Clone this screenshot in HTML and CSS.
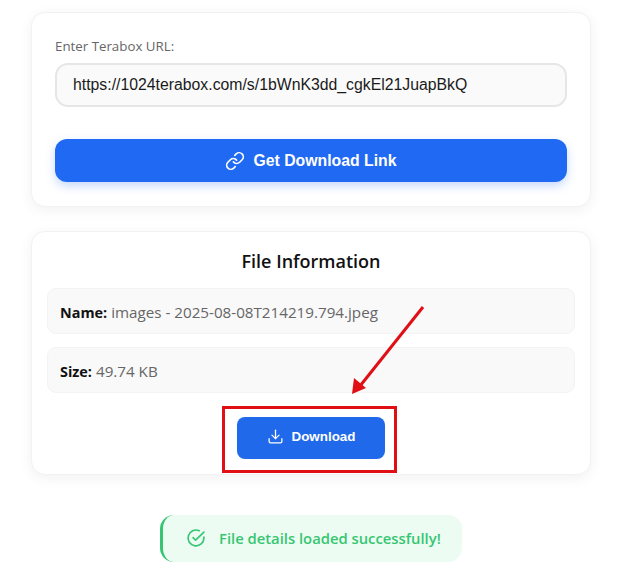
FILE: index.html
```html
<!DOCTYPE html>
<html lang="en">
<head>
    <meta charset="UTF-8">
    <meta name="viewport" content="width=device-width, initial-scale=1.0">
    <title>Terabox Downloader</title>
    <link rel="stylesheet" href="styles.css">
</head>
<body>
    <div class="page">
        <!--url form-->
        <div class="card form-card">
            <label class="label">Enter Terabox URL:</label>
            <div class="input">https://1024terabox.com/s/1bWnK3dd_cgkEl21JuapBkQ</div>
            <button class="btn-main">
                <svg class="icon-link" viewBox="0 0 24 24" fill="none" stroke="#fff" stroke-width="2" stroke-linecap="round" stroke-linejoin="round">
                    <path d="M10 13a5 5 0 0 0 7.54.54l3-3a5 5 0 0 0-7.07-7.07l-1.72 1.71"/>
                    <path d="M14 11a5 5 0 0 0-7.54-.54l-3 3a5 5 0 0 0 7.07 7.07l1.71-1.71"/>
                </svg>
                Get Download Link
            </button>
        </div>

        <!--file info-->
        <div class="card info-card">
            <h2 class="title">File Information</h2>
            <div class="row"><b>Name:</b> images - 2025-08-08T214219.794.jpeg</div>
            <div class="row"><b>Size:</b> 49.74 KB</div>
            <button class="btn-download">
                <svg class="icon-download" viewBox="0 0 24 24" fill="none" stroke="#fff" stroke-width="1.8" stroke-linecap="round" stroke-linejoin="round">
                    <path d="M3 15v4a2 2 0 0 0 2 2h14a2 2 0 0 0 2-2v-4"/>
                    <path d="M7 10l5 5 5-5"/>
                    <path d="M12 15V3"/>
                </svg>
                Download
            </button>
        </div>

        <!--toast-->
        <div class="toast">
            <svg class="icon-check" viewBox="0 0 24 24" fill="none" stroke="#36c672" stroke-width="2" stroke-linecap="round" stroke-linejoin="round">
                <path d="M21.5 11v1a9.5 9.5 0 1 1-5.6-8.7"/>
                <path d="M8.5 11.5l3 3L21.5 5"/>
            </svg>
            File details loaded successfully!
        </div>

        <!--red marks drawn over the screenshot-->
        <span class="mark-box"></span>
        <svg class="mark-arrow" viewBox="0 0 624 577">
            <path d="M423 307L360 386" stroke="#e00f16" stroke-width="3" fill="none"/>
            <path d="M352 394L354 378L366 388Z" fill="#e00f16"/>
        </svg>
    </div>
</body>
</html>
```

FILE: styles.css
```css
*{
    margin: 0;
    padding: 0;
    box-sizing: border-box;
}

body{
    background-color: #fff;
    font-family: "Open Sans", "Noto Sans", sans-serif;
    color: #111;
}

.page{
    width: 624px;
    height: 577px;
    overflow: hidden;
    padding: 12px 33px 0 31px;
    display: flex;
    flex-direction: column;
    align-items: stretch;
    position: relative;
}

.card{
    background-color: #fff;
    border: 1px solid #f2f2f3;
    border-radius: 14px;
    box-shadow: 0 3px 14px rgba(0, 0, 0, 0.06);
}

.form-card{
    height: 195px;
    padding: 24px 23px 0;
}

.label{
    display: block;
    font-size: 13.3px;
    line-height: 18px;
    color: #666;
}

.input{
    height: 44px;
    margin-top: 8px;
    padding-left: 16px;
    display: flex;
    align-items: center;
    font-family: "Liberation Sans", sans-serif;
    font-size: 15.8px;
    color: #1a1a1a;
    background-color: #fafafa;
    border: 2px solid #e6e6e6;
    border-radius: 13px;
}

.btn-main{
    width: 100%;
    height: 43px;
    margin-top: 32px;
    display: flex;
    justify-content: center;
    align-items: center;
    gap: 8px;
    border: none;
    border-radius: 12px;
    background-color: #2069f3;
    color: #fff;
    font-family: "Liberation Sans", sans-serif;
    font-size: 15.8px;
    font-weight: bold;
    box-shadow: 0 4px 10px rgba(32, 105, 243, 0.25);
}

.icon-link{
    width: 20px;
    height: 20px;
}

.info-card{
    height: 244px;
    margin-top: 24px;
    padding: 0 15px;
    display: flex;
    flex-direction: column;
    align-items: center;
}

.title{
    margin-top: 16px;
    font-size: 18px;
    line-height: 27px;
    font-weight: 600;
    color: #111;
}

.row{
    width: 100%;
    height: 46px;
    margin-top: 13px;
    padding: 2px 0 0 12px;
    display: flex;
    align-items: center;
    gap: 4px;
    font-size: 15.2px;
    color: #666;
    background-color: #f9f9fa;
    border: 1px solid #f3f3f4;
    border-radius: 9px;
}

.row b{
    font-weight: 700;
    font-size: 14.4px;
    color: #111;
}

.btn-download{
    width: 148px;
    height: 42px;
    margin-top: 24px;
    padding-bottom: 3px;
    display: flex;
    justify-content: center;
    align-items: center;
    gap: 8px;
    border: none;
    border-radius: 8px;
    background-color: #2069ea;
    color: #fff;
    font-family: "Liberation Sans", sans-serif;
    font-size: 13.4px;
    font-weight: bold;
}

.icon-download{
    width: 17px;
    height: 17px;
}

.toast{
    align-self: flex-start;
    width: 302px;
    height: 47px;
    margin: 40px 0 0 129px;
    padding: 0 0 2px 23px;
    display: flex;
    align-items: center;
    gap: 13px;
    font-size: 14.8px;
    font-weight: 600;
    color: #36c672;
    background-color: #edfcf3;
    border-left: 3px solid #36c672;
    border-radius: 14px;
}

.icon-check{
    width: 20px;
    height: 20px;
    flex-shrink: 0;
}

.mark-box{
    position: absolute;
    left: 222px;
    top: 406px;
    width: 175px;
    height: 67px;
    border: 3px solid #e00f16;
}

.mark-arrow{
    position: absolute;
    left: 0;
    top: 0;
    width: 624px;
    height: 577px;
}
```
